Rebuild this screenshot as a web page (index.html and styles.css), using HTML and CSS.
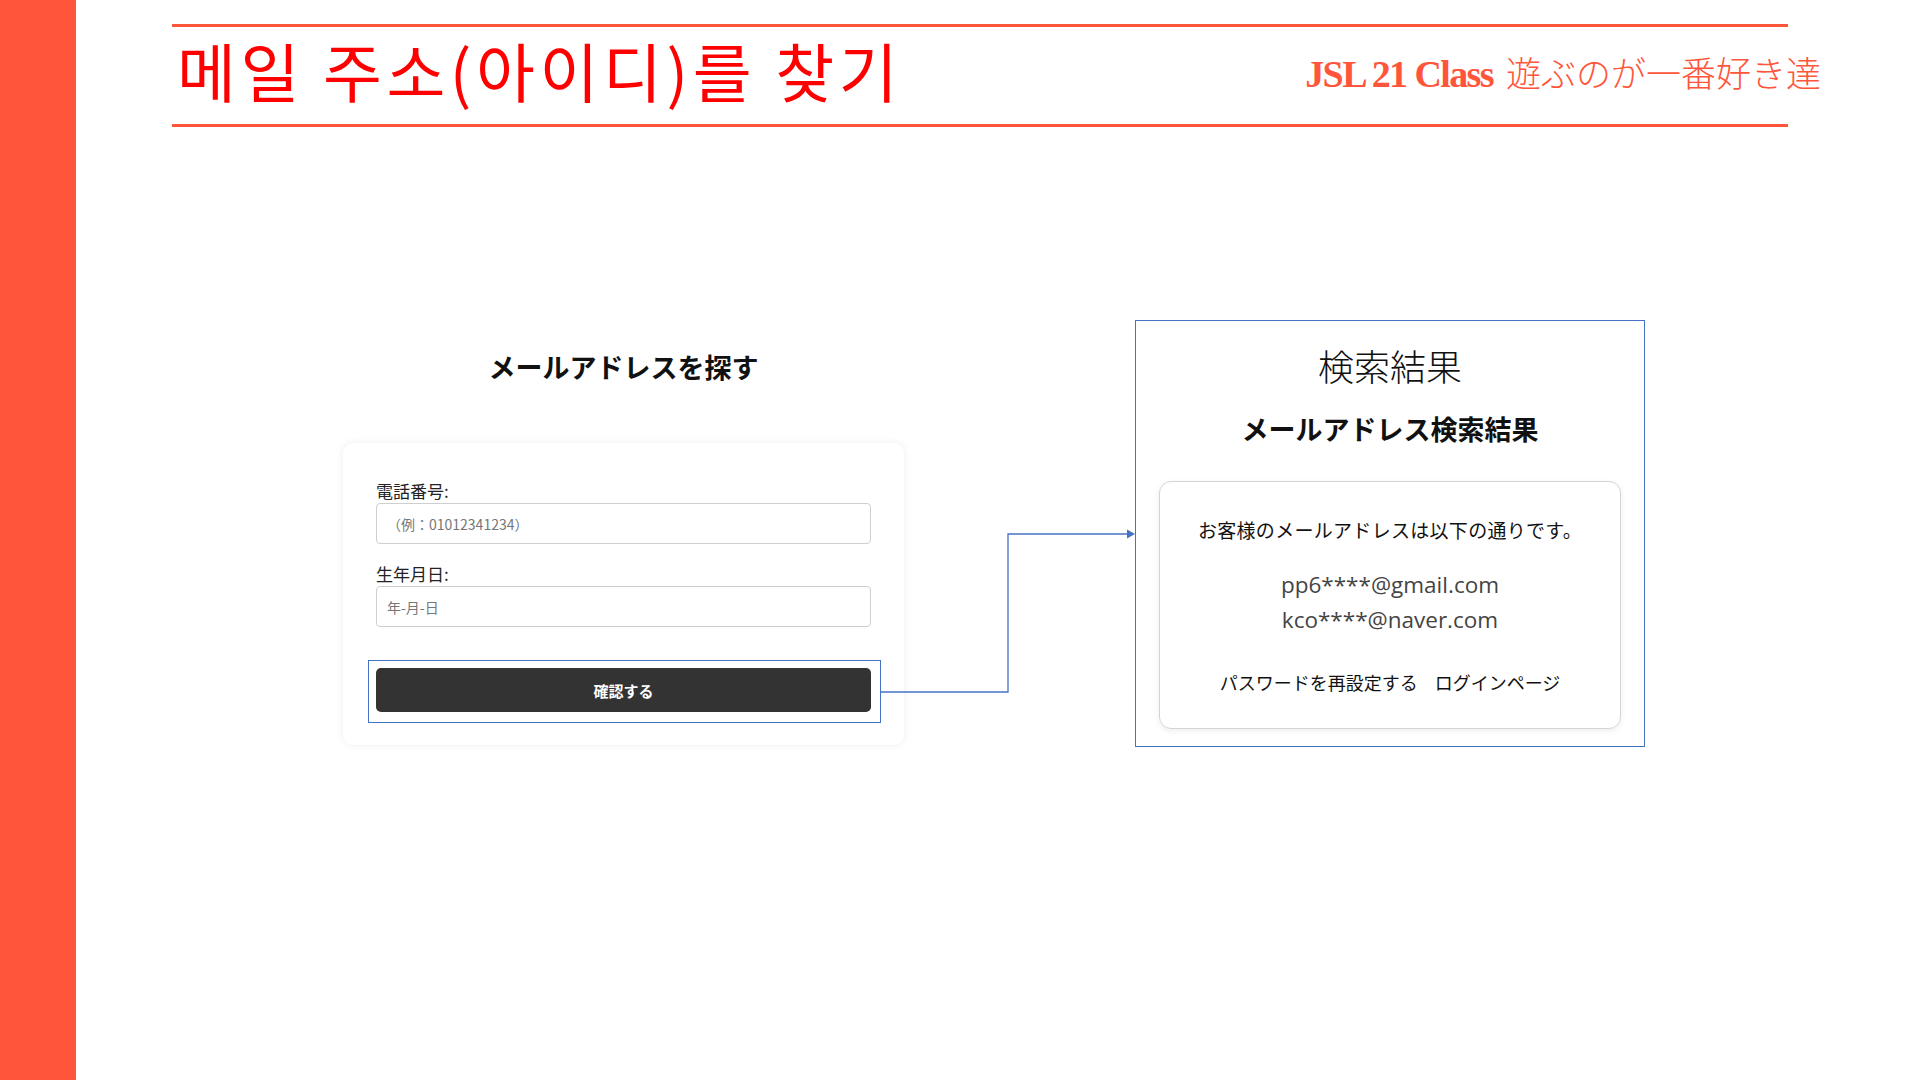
FILE: index.html
```html
<!DOCTYPE html>
<html lang="ja">
<head>
<meta charset="utf-8">
<title>메일 주소(아이디)를 찾기</title>
<link rel="stylesheet" href="styles.css">
</head>
<body>
<div class="side-bar"></div>
<div class="main">
  <header class="header">
    <h1 class="page-title">메일 주소(아이디)를 찾기</h1>
    <div class="brand"><span class="brand-en">JSL 21 Class</span><span class="brand-ja">遊ぶのが一番好き達</span></div>
  </header>

  <section class="content">
    <div class="find">
      <h2 class="find-title">メールアドレスを探す</h2>
      <form class="form-card">
        <div class="field">
          <label class="field-label">電話番号:</label>
          <input class="field-input" type="text" placeholder="（例：01012341234）">
        </div>
        <div class="field">
          <label class="field-label">生年月日:</label>
          <input class="field-input" type="text" placeholder="年-月-日">
        </div>
        <div class="btn-frame">
          <button class="btn" type="button">確認する</button>
        </div>
      </form>
    </div>

    <div class="result">
      <h2 class="result-heading">検索結果</h2>
      <h3 class="result-title">メールアドレス検索結果</h3>
      <div class="result-card">
        <p class="result-text">お客様のメールアドレスは以下の通りです。</p>
        <div class="emails">
          <div>pp6****@gmail.com</div>
          <div>kco****@naver.com</div>
        </div>
        <div class="links">
          <a class="link">パスワードを再設定する</a>
          <a class="link">ログインページ</a>
        </div>
      </div>
    </div>

    <svg class="connector" width="1844" height="427" viewBox="0 0 1844 427">
      <polyline points="805,372 932,372 932,214 1052,214" fill="none" stroke="#4472C4" stroke-width="1.3"/>
      <polygon points="1051,209.5 1059,214 1051,218.5" fill="#4472C4"/>
    </svg>
  </section>
</div>
</body>
</html>
```

FILE: styles.css
```css
* { box-sizing: border-box; }

html, body {
  margin: 0;
  padding: 0;
  background: #ffffff;
}

body {
  display: flex;
  min-height: 1080px;
  font-family: "Noto Sans CJK JP", "Noto Sans", sans-serif;
  color: #111;
}

.side-bar {
  width: 76px;
  flex: 0 0 76px;
  background: #ff553b;
}

.main {
  flex: 1;
}

.header {
  margin: 24px 0 0 96px;
  width: 1616px;
  height: 103px;
  border-top: 3px solid #ff553b;
  border-bottom: 3px solid #ff553b;
  display: flex;
  align-items: center;
  justify-content: space-between;
}

.page-title {
  margin: 0;
  padding-left: 5px;
  font-family: "Noto Sans CJK KR", sans-serif;
  font-weight: 400;
  font-size: 64px;
  line-height: 1;
  letter-spacing: 4.6px;
  color: #ff0000;
  position: relative;
  top: -7px;
}

.brand {
  display: flex;
  align-items: baseline;
  margin-right: -33px;
  color: #ff553b;
  position: relative;
  top: -4px;
}

.brand-en {
  font-family: "Liberation Serif", serif;
  font-weight: 700;
  font-size: 38px;
  letter-spacing: -1.6px;
}

.brand-ja {
  margin-left: 13px;
  font-family: "Noto Sans CJK JP", sans-serif;
  font-weight: 300;
  font-size: 35px;
}

.content {
  position: relative;
  display: flex;
  align-items: flex-start;
  margin-top: 193px;
  padding-left: 267px;
  gap: 231px;
}

.find {
  width: 561px;
  padding-top: 29px;
}

.find-title {
  margin: 0;
  text-align: center;
  font-size: 27px;
  line-height: 36px;
  font-weight: 700;
  color: #111;
}

.form-card {
  margin: 58px 0 0;
  padding: 36px 33px 22px;
  background: #fff;
  border-radius: 10px;
  box-shadow: 0 0 9px rgba(0, 0, 0, 0.07);
}

.field + .field {
  margin-top: 18px;
}

.field-label {
  display: block;
  font-size: 17px;
  line-height: 24px;
  color: #222;
}

.field-input {
  display: block;
  width: 100%;
  height: 41px;
  margin: 0;
  padding: 0 10px;
  border: 1px solid #cfcfcf;
  border-radius: 4px;
  font-family: "Noto Sans CJK JP", sans-serif;
  font-size: 14px;
  color: #333;
  background: #fff;
}

.field-input::placeholder {
  color: #767676;
}

.btn-frame {
  margin: 33px -10px 0 -8px;
  padding: 7px 9px 10px 7px;
  border: 1px solid #4472c4;
}

.btn {
  display: block;
  width: 100%;
  height: 44px;
  border: none;
  border-radius: 5px;
  background: #333333;
  color: #fff;
  font-family: "Noto Sans CJK JP", sans-serif;
  font-weight: 700;
  font-size: 15px;
}

.result {
  width: 510px;
  padding: 0 23px 17px;
  border: 1px solid #4472c4;
  background: #fff;
  text-align: center;
}

.result-heading {
  margin: 22px 0 0;
  font-size: 36px;
  line-height: 44px;
  font-weight: 300;
  color: #111;
}

.result-title {
  margin: 24px 0 0;
  font-size: 27px;
  line-height: 36px;
  font-weight: 700;
  color: #111;
}

.result-card {
  margin-top: 34px;
  width: 462px;
  padding: 34px 0 33px;
  border: 1px solid #d4d4d4;
  border-radius: 12px;
  box-shadow: 0 2px 6px rgba(0, 0, 0, 0.07);
}

.result-text {
  margin: 0;
  font-size: 19px;
  line-height: 28px;
  letter-spacing: 0.3px;
  color: #111;
}

.emails {
  margin-top: 23px;
  font-family: "Open Sans", "Noto Sans", sans-serif;
  font-size: 22.5px;
  font-weight: 500;
  line-height: 35px;
  color: #444;
}

.links {
  margin-top: 32px;
  display: flex;
  justify-content: center;
  gap: 17px;
  font-size: 18px;
  line-height: 26px;
}

.link {
  color: #111;
  text-decoration: none;
}

.connector {
  position: absolute;
  left: 0;
  top: 0;
  pointer-events: none;
  overflow: visible;
}
```
